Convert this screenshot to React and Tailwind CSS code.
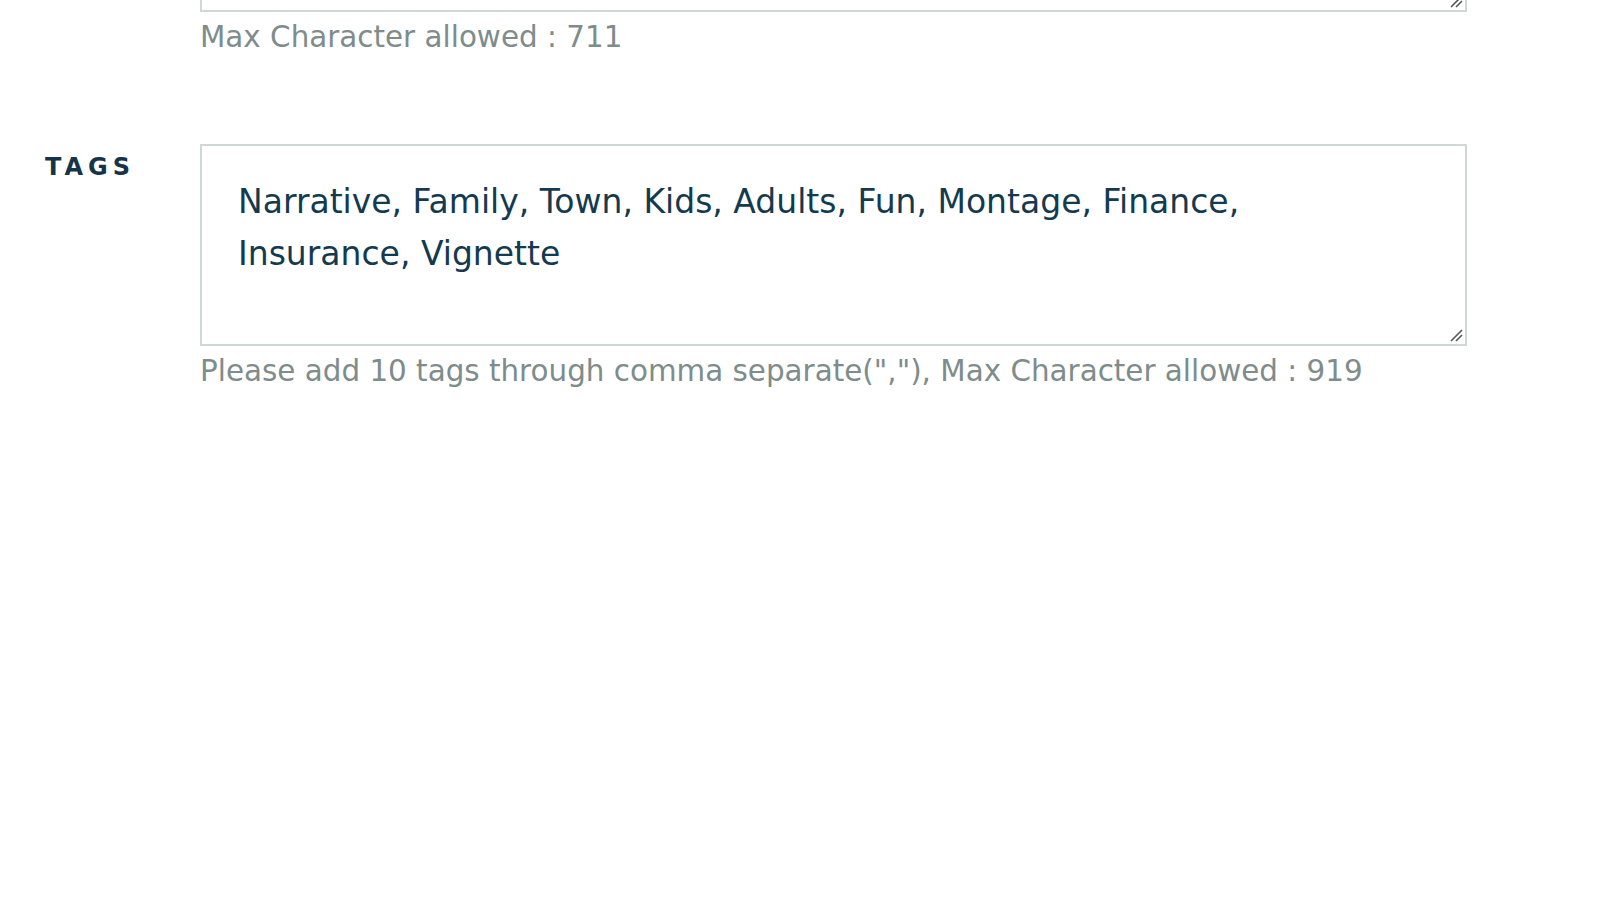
import React from "react";

const font = { fontFamily: '"DejaVu Sans", "Liberation Sans", sans-serif' };

// resize grip drawn like the reference's two diagonal strokes
const Grip = () => (
  <svg
    className="absolute right-[4px] bottom-[4px] pointer-events-none"
    width="14"
    height="14"
    viewBox="0 0 14 14"
  >
    <line x1="2" y1="13" x2="13" y2="2" stroke="#555" strokeWidth="1.6" />
    <line x1="7" y1="13" x2="13" y2="7" stroke="#555" strokeWidth="1.6" />
  </svg>
);

const FieldRow = ({ label, value, help, height, className = "" }) => {
  return (
    <div className={`flex pl-[45px] ${className}`}>
      <div className="w-[155px] shrink-0 pt-[7px]">
        {label && (
          <span className="text-[24px] font-bold tracking-[5px] leading-[33px] text-[#15344a]">
            {label}
          </span>
        )}
      </div>
      <div className="w-[1267px]">
        <div className="relative">
          <textarea
            defaultValue={value}
            className={`block w-full ${height} resize-none border-2 border-[#d0d8d6] bg-white pl-[36px] pr-[150px] pt-[30px] text-[33px] leading-[52px] text-[#143a4f] outline-none`}
            style={font}
          />
          <Grip />
        </div>
        <p className="mt-[7px] text-[29.4px] leading-[36px] text-[#7e8c8b]">{help}</p>
      </div>
    </div>
  );
};

export default function App() {
  return (
    <div className="w-[1600px] h-[900px] overflow-hidden bg-white" style={font}>
      <div className="-mt-[190px]">
        <FieldRow
          label=""
          value=""
          height="h-[202px]"
          help="Max Character allowed : 711"
        />
        <FieldRow
          className="mt-[89px]"
          label="TAGS"
          value="Narrative, Family, Town, Kids, Adults, Fun, Montage, Finance, Insurance, Vignette"
          height="h-[202px]"
          help={'Please add 10 tags through comma separate(","), Max Character allowed : 919'}
        />
      </div>
    </div>
  );
}
